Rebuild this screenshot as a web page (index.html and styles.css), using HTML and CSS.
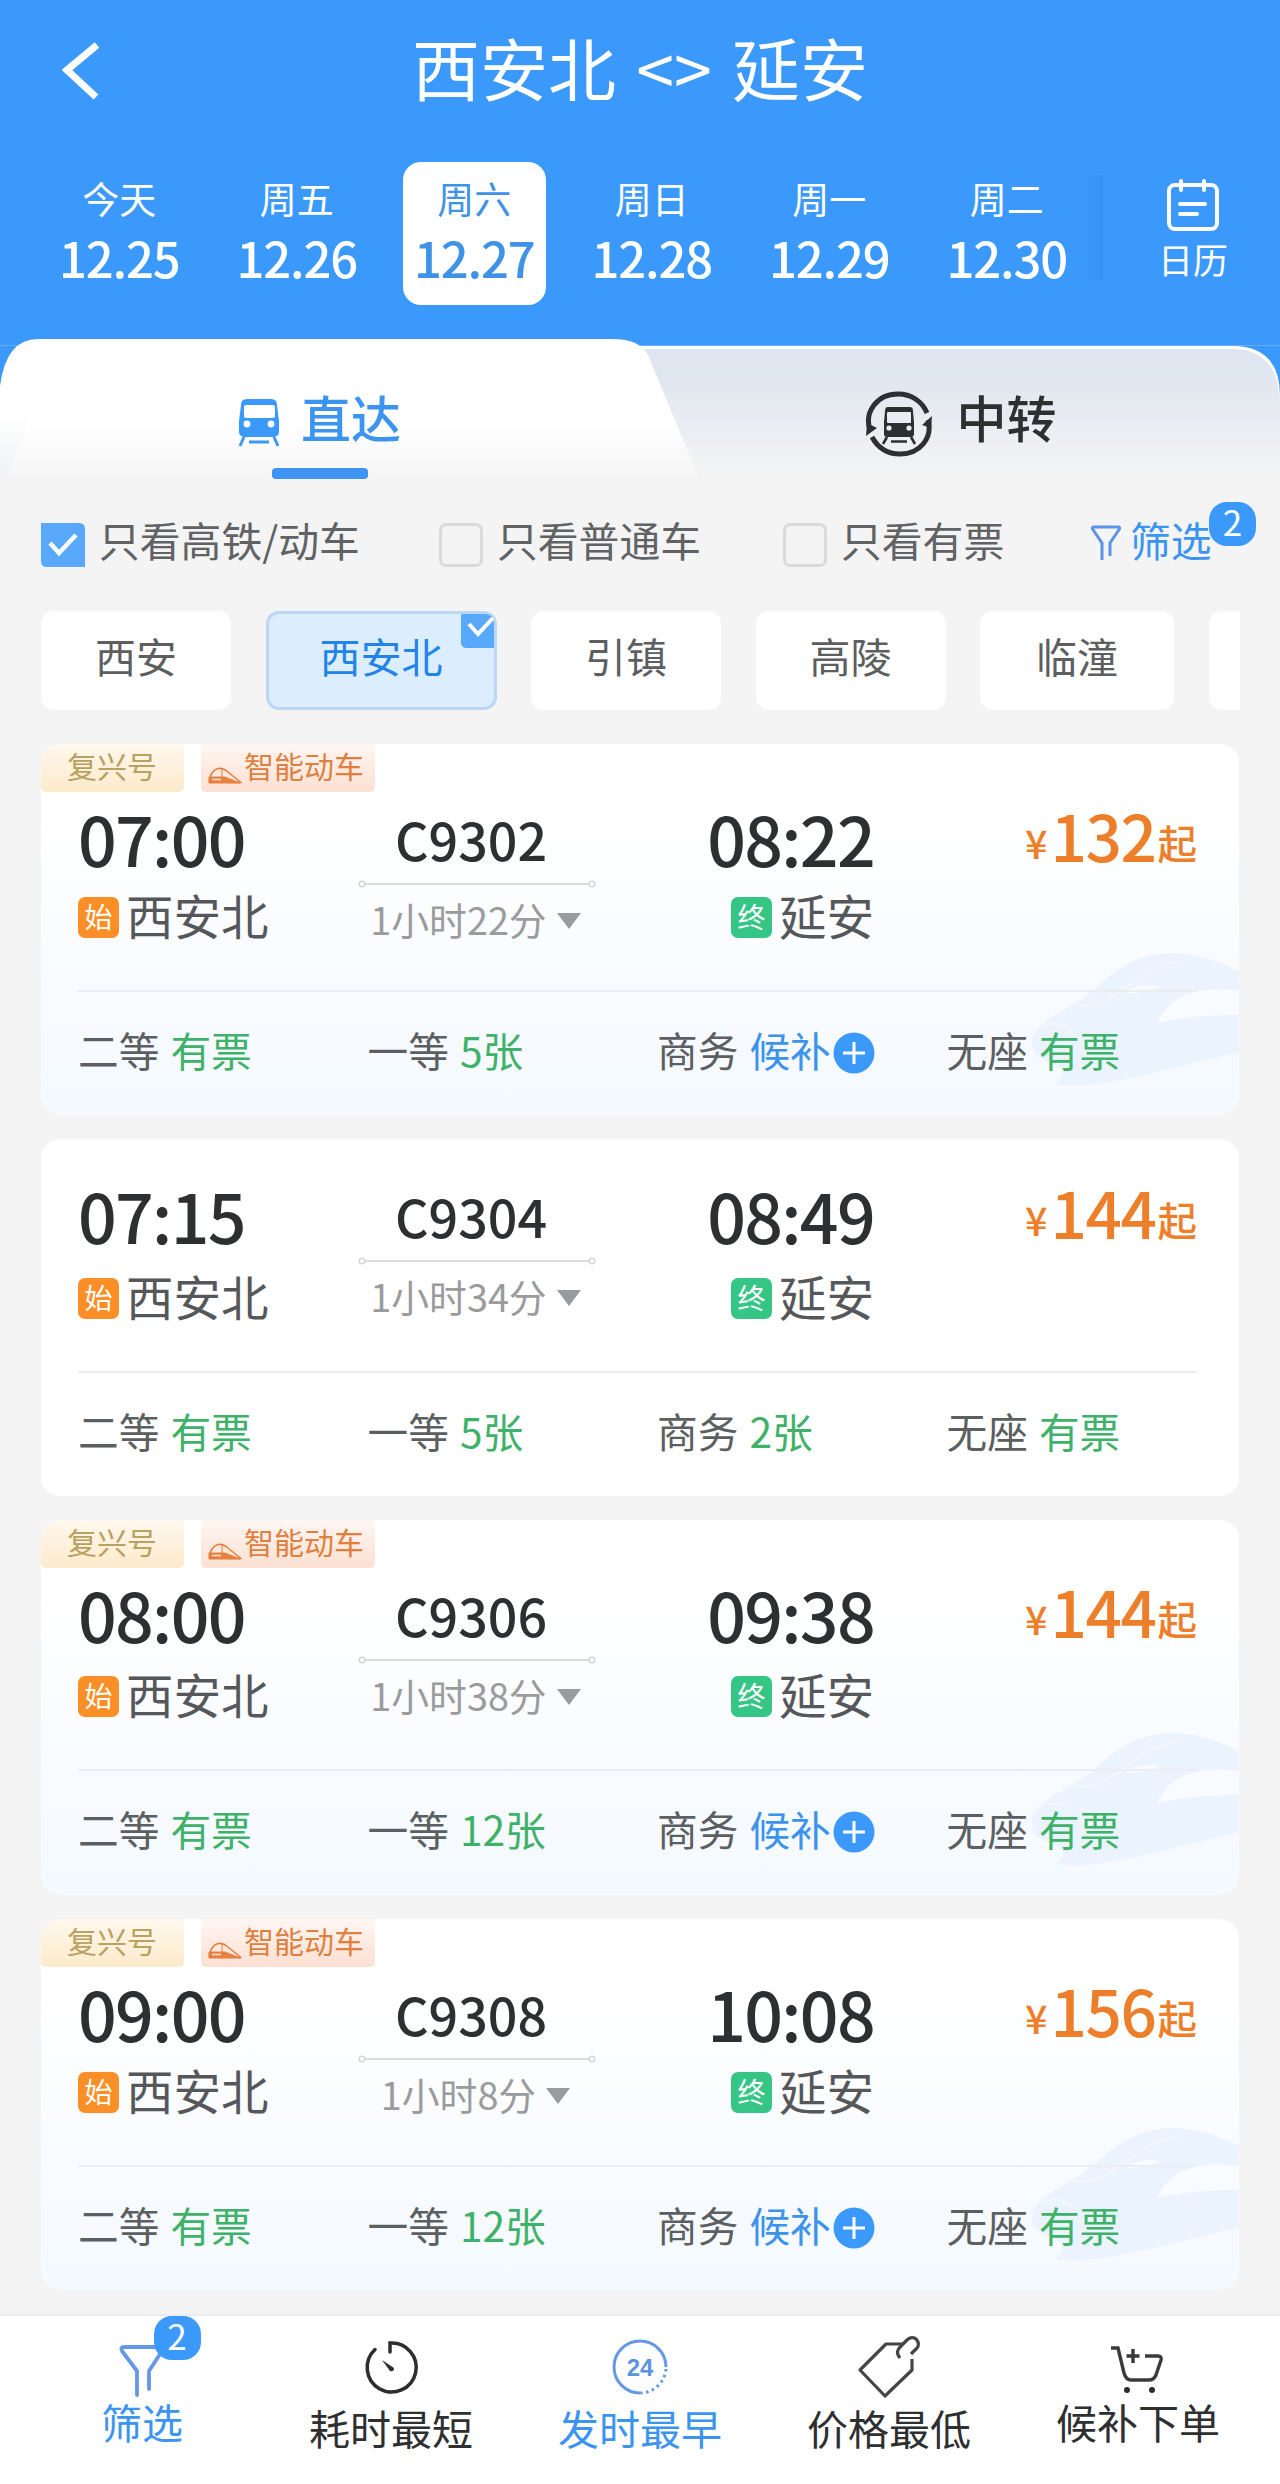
FILE: index.html
```html
<!DOCTYPE html>
<html lang="zh-CN">
<head>
  <meta charset="UTF-8" />
  <title>西安北 - 延安</title>
  <link rel="stylesheet" href="styles.css">
</head>
<body>

  <!-- Shared shapes -->
  <svg class="defs" width="0" height="0">
    <symbol id="line" viewBox="0 0 238 10">
      <path d="M7 5H231" stroke="#dcdcdc" stroke-width="2"/>
      <circle cx="4" cy="5" r="2.8" fill="#fff" stroke="#d6d6d6" stroke-width="1.5"/>
      <circle cx="234" cy="5" r="2.8" fill="#fff" stroke="#d6d6d6" stroke-width="1.5"/>
    </symbol>
    <symbol id="plus" viewBox="0 0 42 42">
      <circle cx="21" cy="21" r="20.5" fill="#3b99fc"/>
      <path d="M21 10V32M10 21H32" stroke="#fff" stroke-width="3"/>
    </symbol>
    <symbol id="emu" viewBox="0 0 34 17">
      <path d="M1.5 15C2 8 5 3 10 1.5C13 1 15 1.5 18 3.5L33 15.5Z" fill="none" stroke="#e5803f" stroke-width="1.6" stroke-linejoin="round"/>
      <path d="M1 10H17L32 16H1ZM14 2V10" fill="#e5803f" stroke="#e5803f" stroke-width="1"/>
      <path d="M4 12.5H13" stroke="#fde6da" stroke-width="1.3"/>
    </symbol>
    <symbol id="train" viewBox="0 0 210 140">
      <path d="M210 20C185 8 165 2 143 2C115 3 100 12 83 23C70 34 60 44 50 50C30 62 8 72 3 88C1 102 10 108 25 113C36 118 36 124 27 133C60 139 110 126 210 101Z" fill="#eaf3fe"/>
      <path d="M128 72C134 60 140 52 152 46C168 38 188 37 210 40V64C180 64 155 66 128 72Z" fill="#f8fbff"/>
      <path d="M97 42C106 34 118 32 132 35C122 38 114 43 97 42Z" fill="#f8fbff"/>
      <path d="M40 54C58 58 70 54 84 45C100 36 118 14 152 10M3 80C18 70 34 70 44 82" fill="none" stroke="#f3f8ff" stroke-width="2"/>
    </symbol>
  </svg>

  <!-- Header -->
  <header class="header">
    <div class="titlebar">
      <svg class="back" width="40" height="58" viewBox="0 0 40 58"><path d="M35 3L5 28L34 55" fill="none" stroke="#fff" stroke-width="7"/></svg>
      <h1>西安北 &lt;&gt; 延安</h1>
    </div>
    <div class="dates">
      <div class="date"><span>今天</span><b>12.25</b></div>
      <div class="date"><span>周五</span><b>12.26</b></div>
      <div class="date active"><span>周六</span><b>12.27</b></div>
      <div class="date"><span>周日</span><b>12.28</b></div>
      <div class="date"><span>周一</span><b>12.29</b></div>
      <div class="date"><span>周二</span><b>12.30</b></div>
      <div class="calendar">
        <svg width="54" height="54" viewBox="0 0 54 54" fill="none" stroke="#fff" stroke-width="4" stroke-linecap="round">
          <rect x="3" y="6" width="48" height="44" rx="6"/>
          <path d="M15 2V11M38 2V11M14 25H39M14 35H31"/>
        </svg>
        <span>日历</span>
      </div>
    </div>
  </header>

  <!-- Direct / transfer tabs -->
  <div class="tabs">
    <svg class="tabs-bg" width="1280" height="145" viewBox="0 0 1280 145">
      <defs>
        <linearGradient id="left" x1="0" y1="0" x2="0" y2="1">
          <stop offset="0.6" stop-color="#fff"/>
          <stop offset="1" stop-color="#f4f4f4"/>
        </linearGradient>
        <linearGradient id="right" x1="0" y1="0" x2="0" y2="1">
          <stop offset="0" stop-color="#dde5f0"/>
          <stop offset="0.3" stop-color="#e3e8f0"/>
          <stop offset="1" stop-color="#f4f4f4"/>
        </linearGradient>
        <linearGradient id="edge" x1="0" y1="0" x2="0" y2="1">
          <stop offset="0" stop-color="#f4f6f9" stop-opacity="0"/>
          <stop offset="1" stop-color="#f3f4f6"/>
        </linearGradient>
      </defs>
      <rect width="1280" height="66" fill="#3b99fc"/>
      <rect y="9" width="1280" height="1" fill="#63aefc"/>
      <path d="M560 10H1236Q1280 12 1280 60V80H560Z" fill="#fff"/>
      <path d="M560 13H1234Q1277 14 1280 64V145H560Z" fill="url(#right)"/>
      <path d="M0 50Q6 3 38 3H612C630 3 641 7 648 19L700 145H0Z" fill="url(#left)"/>
      <path d="M0 74H34L4 145H0Z" fill="url(#edge)"/>
    </svg>
    <div class="tab active">
      <svg width="42" height="48" viewBox="0 0 42 48">
        <path d="M9 0H33Q39 0 39 6L41 22V33Q41 37 36 38H6Q1 37 1 33V22L3 6Q3 0 9 0Z" fill="#3b99fc"/>
        <rect x="6" y="6" width="31" height="13" rx="2" fill="#fff"/>
        <circle cx="9" cy="25" r="3.4" fill="#fff"/>
        <circle cx="33" cy="25" r="3.4" fill="#fff"/>
        <path d="M6 38L2 47M36 38L40 47M11 43H31" stroke="#3b99fc" stroke-width="3"/>
      </svg>
      <span>直达</span>
    </div>
    <div class="tab">
      <svg class="transfer" width="68" height="68" viewBox="0 0 68 68">
        <path d="M5 40C-1 22 12 4 33 4C46 4 57 11 62 23M63 30C68 48 55 64 35 64C23 64 13 58 7 47" fill="none" stroke="#2d2f31" stroke-width="5"/>
        <path d="M1 46L2 33L12 38ZM67 26L66 38L57 35Z" fill="#2d2f31"/>
        <path d="M23 17H45Q48 17 48 21L49 32V44Q49 47 46 47H22Q19 47 19 44V32L20 21Q20 17 23 17Z" fill="#2d2f31"/>
        <rect x="22" y="22" width="24" height="11" rx="1" fill="#e9edf3"/>
        <circle cx="24" cy="38" r="2.6" fill="#e9edf3"/>
        <circle cx="44" cy="38" r="2.6" fill="#e9edf3"/>
        <path d="M22 47L18 54M46 47L50 54M26 51.5H42" stroke="#2d2f31" stroke-width="2.6"/>
      </svg>
      <span>中转</span>
    </div>
  </div>

  <!-- Filters -->
  <div class="filters">
    <div class="filter wide">
      <svg width="44" height="44" viewBox="0 0 44 44"><path d="M0 0H38Q44 0 44 6V44H6Q0 44 0 38Z" fill="#58a8fb"/><path d="M9 20L18 30L35 12" fill="none" stroke="#fff" stroke-width="4.5"/></svg>
      <span>只看高铁/动车</span>
    </div>
    <div class="filter mid"><i class="box"></i><span>只看普通车</span></div>
    <div class="filter small"><i class="box"></i><span>只看有票</span></div>
    <div class="filter more">
      <svg width="32" height="36" viewBox="0 0 32 36"><path d="M12 35V18L2.5 4Q2 2 4 2H28Q30 2 29.500 4L20 18V31" fill="none" stroke="#5b93e8" stroke-width="3"/></svg>
      <span>筛选</span>
      <em class="count">2</em>
    </div>
  </div>

  <!-- Stations -->
  <div class="chips">
    <div class="chip">西安</div>
    <div class="chip selected">西安北
      <svg class="tick" width="33" height="34" viewBox="0 0 33 34"><path d="M0 0H25Q33 1 33 9V34H6Q0 34 0 28Z" fill="#58a8fb"/><path d="M8 10L17 20L32 4" fill="none" stroke="#fff" stroke-width="4"/></svg>
    </div>
    <div class="chip">引镇</div>
    <div class="chip">高陵</div>
    <div class="chip last">临潼</div>
    <div class="chip"></div>
  </div>

  <!-- Trains -->
  <div class="list">
    <div class="card fuxing">
      <svg class="train" width="210" height="140"><use href="#train"/></svg>
      <div class="tags">
        <span class="tag gold">复兴号</span>
        <span class="tag smart"><svg width="34" height="17"><use href="#emu"/></svg>智能动车</span>
      </div>
      <div class="trip">
        <div class="stop">
          <div class="time">07:00</div>
          <div class="station"><i class="mark from">始</i><span>西安北</span></div>
        </div>
        <div class="middle">
          <div class="code">C9302</div>
          <svg width="238" height="10"><use href="#line"/></svg>
          <div class="duration">1小时22分<i class="arrow"></i></div>
        </div>
        <div class="stop end">
          <div class="time">08:22</div>
          <div class="station"><i class="mark to">终</i><span>延安</span></div>
        </div>
        <div class="price"><small>¥</small>132<small>起</small></div>
      </div>
      <div class="seats">
        <div class="seat">二等<span class="ok">有票</span></div>
        <div class="seat">一等<span class="ok">5张</span></div>
        <div class="seat">商务<span class="wait">候补</span><svg width="42" height="42"><use href="#plus"/></svg></div>
        <div class="seat">无座<span class="ok">有票</span></div>
      </div>
    </div>

    <div class="card plain">
      <div class="trip">
        <div class="stop">
          <div class="time">07:15</div>
          <div class="station"><i class="mark from">始</i><span>西安北</span></div>
        </div>
        <div class="middle">
          <div class="code">C9304</div>
          <svg width="238" height="10"><use href="#line"/></svg>
          <div class="duration">1小时34分<i class="arrow"></i></div>
        </div>
        <div class="stop end">
          <div class="time">08:49</div>
          <div class="station"><i class="mark to">终</i><span>延安</span></div>
        </div>
        <div class="price"><small>¥</small>144<small>起</small></div>
      </div>
      <div class="seats">
        <div class="seat">二等<span class="ok">有票</span></div>
        <div class="seat">一等<span class="ok">5张</span></div>
        <div class="seat">商务<span class="ok">2张</span></div>
        <div class="seat">无座<span class="ok">有票</span></div>
      </div>
    </div>

    <div class="card fuxing loose">
      <svg class="train" width="210" height="140"><use href="#train"/></svg>
      <div class="tags">
        <span class="tag gold">复兴号</span>
        <span class="tag smart"><svg width="34" height="17"><use href="#emu"/></svg>智能动车</span>
      </div>
      <div class="trip">
        <div class="stop">
          <div class="time">08:00</div>
          <div class="station"><i class="mark from">始</i><span>西安北</span></div>
        </div>
        <div class="middle">
          <div class="code">C9306</div>
          <svg width="238" height="10"><use href="#line"/></svg>
          <div class="duration">1小时38分<i class="arrow"></i></div>
        </div>
        <div class="stop end">
          <div class="time">09:38</div>
          <div class="station"><i class="mark to">终</i><span>延安</span></div>
        </div>
        <div class="price"><small>¥</small>144<small>起</small></div>
      </div>
      <div class="seats">
        <div class="seat">二等<span class="ok">有票</span></div>
        <div class="seat">一等<span class="ok">12张</span></div>
        <div class="seat">商务<span class="wait">候补</span><svg width="42" height="42"><use href="#plus"/></svg></div>
        <div class="seat">无座<span class="ok">有票</span></div>
      </div>
    </div>

    <div class="card fuxing">
      <svg class="train" width="210" height="140"><use href="#train"/></svg>
      <div class="tags">
        <span class="tag gold">复兴号</span>
        <span class="tag smart"><svg width="34" height="17"><use href="#emu"/></svg>智能动车</span>
      </div>
      <div class="trip">
        <div class="stop">
          <div class="time">09:00</div>
          <div class="station"><i class="mark from">始</i><span>西安北</span></div>
        </div>
        <div class="middle">
          <div class="code">C9308</div>
          <svg width="238" height="10"><use href="#line"/></svg>
          <div class="duration">1小时8分<i class="arrow"></i></div>
        </div>
        <div class="stop end">
          <div class="time">10:08</div>
          <div class="station"><i class="mark to">终</i><span>延安</span></div>
        </div>
        <div class="price"><small>¥</small>156<small>起</small></div>
      </div>
      <div class="seats">
        <div class="seat">二等<span class="ok">有票</span></div>
        <div class="seat">一等<span class="ok">12张</span></div>
        <div class="seat">商务<span class="wait">候补</span><svg width="42" height="42"><use href="#plus"/></svg></div>
        <div class="seat">无座<span class="ok">有票</span></div>
      </div>
    </div>
  </div>

  <!-- Bottom bar -->
  <nav class="bottom">
    <div class="item on high">
      <svg width="66" height="66" viewBox="0 0 66 66"><path d="M28 61V37L13 17Q11 13 15 13H51Q55 13 53 17L40 37V55" fill="none" stroke="#6597e6" stroke-width="3.8" stroke-linecap="round"/></svg>
      <span>筛选</span>
      <em class="count">2</em>
    </div>
    <div class="item">
      <svg width="66" height="66" viewBox="0 0 66 66"><path d="M32 18V9A24.500 24.500 0 1 1 17 15.500" fill="none" stroke="#2d2d2d" stroke-width="3.500" stroke-linecap="round"/><path d="M24 26L36 34Q36 38 32 37Z" fill="#2d2d2d"/></svg>
      <span>耗时最短</span>
    </div>
    <div class="item on">
      <svg width="66" height="66" viewBox="0 0 66 66" fill="none" stroke="#6597e6" stroke-width="3">
        <path d="M59 33A26 26 0 1 0 33 59"/>
        <path d="M59 35A26 26 0 0 1 33 59" stroke-dasharray="2.500 3.500"/>
        <text x="33" y="42" text-anchor="middle">24</text>
      </svg>
      <span>发时最早</span>
    </div>
    <div class="item">
      <svg width="66" height="66" viewBox="0 0 66 66" fill="none" stroke="#454545" stroke-width="3.200" stroke-linejoin="round">
        <path d="M47 10H30L4 36L29 62L56 36V25"/>
        <path d="M44 24C40 19 41 16 45 12L51 6C54 3 58 3 60 5C63 8 63 12 61 14L55 20"/>
      </svg>
      <span>价格最低</span>
    </div>
    <div class="item high">
      <svg width="66" height="66" viewBox="0 0 66 66" fill="none" stroke="#3a3a3a" stroke-width="3.400">
        <path d="M6 14H13L19 39Q21 46 26 46H44Q49 46 51 41L56 26Q57 22 53 22H40M28 15V29M21.500 22H34.500"/>
        <circle cx="22" cy="56" r="3" fill="#2d2d2d" stroke="none"/>
        <circle cx="47" cy="56" r="3" fill="#2d2d2d" stroke="none"/>
      </svg>
      <span>候补下单</span>
    </div>
  </nav>

</body>
</html>
```
FILE: styles.css
```css
* {
  box-sizing: border-box;
}

body {
  margin: 0;
  width: 1280px;
  height: 2484px;
  overflow: hidden;
  background: #f4f4f4;
  color: #2d2f31;
  font-family: "Noto Sans CJK SC", sans-serif;
}

svg {
  display: block;
  flex: none;
}

i, em {
  font-style: normal;
}

.defs {
  position: absolute;
}

/* header */
.header {
  height: 336px;
  background: #3b99fc;
  color: #fff;
}

.titlebar {
  display: flex;
  align-items: center;
  height: 162px;
  padding: 0 62px 30px;
}

.back {
  margin-top: 9px;
}

.titlebar h1 {
  flex: 1;
  margin: 2px 40px 0 0;
  text-align: center;
  font-size: 68px;
  font-weight: 400;
  line-height: 80px;
  word-spacing: 5px;
}

.dates {
  display: flex;
  gap: 35px;
  padding-left: 48px;
}

.date {
  width: 142.500px;
  height: 143px;
  padding-top: 12px;
  border-radius: 18px;
  text-align: center;
}

.date span,
.date b {
  display: block;
}

.date span {
  font-size: 37px;
  line-height: 48px;
}

.date b {
  margin-top: 9px;
  font-size: 49px;
  font-weight: 500;
  line-height: 52px;
  letter-spacing: -1.200px;
}

.date.active {
  background: #fff;
  color: #3f93e6;
}

.calendar {
  display: flex;
  flex-direction: column;
  align-items: center;
  flex: 1;
  margin-left: -28px;
  height: 143px;
  padding: 17px 0 0 21px;
  background: linear-gradient(to right, rgba(30, 110, 210, 0), rgba(30, 110, 210, 0.16)) no-repeat 0 13px / 18px 105px;
  font-size: 35px;
  line-height: 48px;
}

.calendar span {
  margin-top: 2px;
}

/* tabs */
.tabs {
  position: relative;
  display: flex;
  height: 145px;
}

.tabs-bg {
  position: absolute;
  top: 0;
  left: 0;
}

.tab {
  position: relative;
  flex: 1;
  display: flex;
  justify-content: center;
  align-items: center;
  height: 159px;
  font-size: 50px;
  line-height: 60px;
  font-weight: 500;
}

.tab svg {
  margin: 15px 21px 0 0;
}

.tab .transfer {
  margin: 17px 24px 0 0;
}

.tab.active {
  padding-right: 2px;
  color: #3b95f0;
}

.tab.active::after {
  content: "";
  position: absolute;
  left: 272px;
  top: 132px;
  width: 96px;
  height: 11px;
  border-radius: 4px;
  background: #3f93f2;
}

/* filters */
.filters {
  display: flex;
  height: 130px;
  padding: 37px 0 0 41px;
  color: #606264;
  font-size: 40.800px;
  line-height: 48px;
}

.filter {
  display: flex;
  height: 54px;
  align-items: center;
}

.filter span {
  margin: -10px 0 0 14px;
  white-space: nowrap;
}

.filter.wide { width: 398px; }
.filter.mid { width: 344px; }
.filter.small { width: 308px; }

.filter .box {
  width: 44px;
  height: 44px;
  border: 3px solid #dadada;
  border-radius: 7px;
}

.filter.more {
  position: relative;
  color: #3b95f0;
}

.filter.more svg {
  margin: -4px 0 0 -1px;
}

.filter.more span {
  margin-left: 8px;
}

.count {
  position: absolute;
  width: 47px;
  height: 44px;
  border-radius: 18px;
  background: #3b99fc;
  color: #fff;
  font-size: 35px;
  line-height: 38px;
  text-align: center;
}

.filter.more .count {
  left: 118px;
  top: -16px;
}

/* station chips */
.chips {
  display: flex;
  gap: 34.500px;
  width: 1199px;
  margin: 0 0 34px 41px;
  overflow: hidden;
}

.chip {
  flex: none;
  width: 190px;
  height: 99px;
  border-radius: 13px;
  background: #fff;
  color: #5c5e60;
  font-size: 41px;
  line-height: 89px;
  text-align: center;
}

.chip.last {
  width: 194px;
}

.chip.selected {
  position: relative;
  width: 231px;
  border: 3px solid #bcd7f5;
  background: #dcedfd;
  color: #2184e8;
  line-height: 83px;
}

.tick {
  position: absolute;
  top: 0;
  right: 0;
}

/* train cards */
.list {
  display: flex;
  flex-direction: column;
  gap: 24px;
  height: 1570px;
  padding: 0 41px;
}

.card {
  flex: none;
  position: relative;
  height: 371px;
  border-radius: 20px;
  background: #fff;
  overflow: hidden;
}

.card.plain {
  height: 357px;
}

.card.loose {
  height: 375px;
}

.card.fuxing {
  background: linear-gradient(#fff 20%, #f8fbff 65%, #f5faff);
}

.train {
  position: absolute;
  right: 0;
  bottom: 24px;
}

.tags {
  display: flex;
  gap: 17px;
}

.tag {
  display: flex;
  height: 48px;
  border-radius: 0 0 5px 5px;
  font-size: 30px;
  line-height: 43px;
}

.tag.gold {
  width: 143px;
  padding-left: 26px;
  background: linear-gradient(#fff8ee, #fdeacb);
  color: #b9a160;
}

.tag.smart {
  width: 174px;
  padding-left: 7px;
  background: linear-gradient(#fff6f2, #fce0d2);
  color: #e0803f;
}

.tag.smart svg {
  margin: 23px 2px 0 0;
}

.trip {
  position: relative;
  display: flex;
  margin: 0 42px 0 37px;
  padding-top: 12px;
  border-bottom: 2px solid #ebedf0;
}

.plain .trip {
  padding-top: 42px;
}

.stop {
  width: 280px;
}

.time {
  font-size: 68px;
  font-weight: 500;
  line-height: 68px;
  letter-spacing: -1.700px;
}

.station {
  display: flex;
  align-items: center;
  margin: 21px 0 49px;
  height: 48px;
  color: #55575a;
  font-size: 47.500px;
}

.plain .station {
  margin-top: 25px;
}

.loose .station {
  margin-top: 24px;
}

.station span {
  line-height: 43px;
  margin: -6px 0 0 7px;
}

.mark {
  width: 41px;
  height: 41px;
  border-radius: 7px;
  color: #fff;
  font-size: 28px;
  line-height: 38px;
  text-align: center;
}

.mark.from { background: #fa8f28; }
.mark.to { background: #35c686; }

.middle {
  width: 238px;
  text-align: center;
}

.code {
  padding: 1px 12px 0 0;
  font-size: 52px;
  font-weight: 500;
  line-height: 68px;
}

.middle svg {
  margin: 6px 0 10px;
}

.duration {
  display: flex;
  justify-content: center;
  align-items: center;
  padding-right: 3px;
  color: #999b9d;
  font-size: 37.800px;
  line-height: 40px;
}

.arrow {
  margin: 3px 0 0 10px;
  border: 12px solid transparent;
  border-top: 16px solid #999b9d;
  border-bottom: 0;
}

.stop.end {
  display: flex;
  flex-direction: column;
  align-items: flex-end;
  width: 278px;
}

.price {
  flex: 1;
  text-align: right;
  color: #ed7f2b;
  font-size: 64px;
  font-weight: 500;
  line-height: 61px;
  letter-spacing: -1.500px;
}

.price small {
  font-size: 39.500px;
  line-height: 1;
  letter-spacing: 0;
  vertical-align: 3px;
}

.price small:first-child {
  margin-right: 3px;
}

.price small:last-child {
  margin-left: 2px;
}

.seats {
  display: flex;
  padding: 34px 0 0 37px;
  color: #5c5f61;
  font-size: 40.700px;
  line-height: 48px;
  position: relative;
}

.seat {
  display: flex;
  width: 289.500px;
}

.seat span {
  margin-left: 11px;
}

.seat svg {
  margin: 6px 0 0 2px;
}

.ok { color: #3fb26a; }
.wait { color: #3b93ee; }

/* bottom bar */
.bottom {
  display: flex;
  justify-content: center;
  height: 170px;
  border-top: 2px solid #ececec;
  background: #fff;
}

.item {
  position: relative;
  display: flex;
  flex-direction: column;
  align-items: center;
  width: 249px;
  padding-top: 18px;
  font-size: 41px;
  line-height: 48px;
}

.item span {
  margin-top: 3px;
}

.item.high span {
  margin-top: -3px;
}

.item.on {
  color: #3b95f0;
}

.item text {
  fill: #5b93e0;
  stroke: none;
  font-size: 24px;
  font-weight: 700;
  font-family: "Liberation Sans", sans-serif;
}

.item .count {
  left: 136px;
  top: 0;
}
```
